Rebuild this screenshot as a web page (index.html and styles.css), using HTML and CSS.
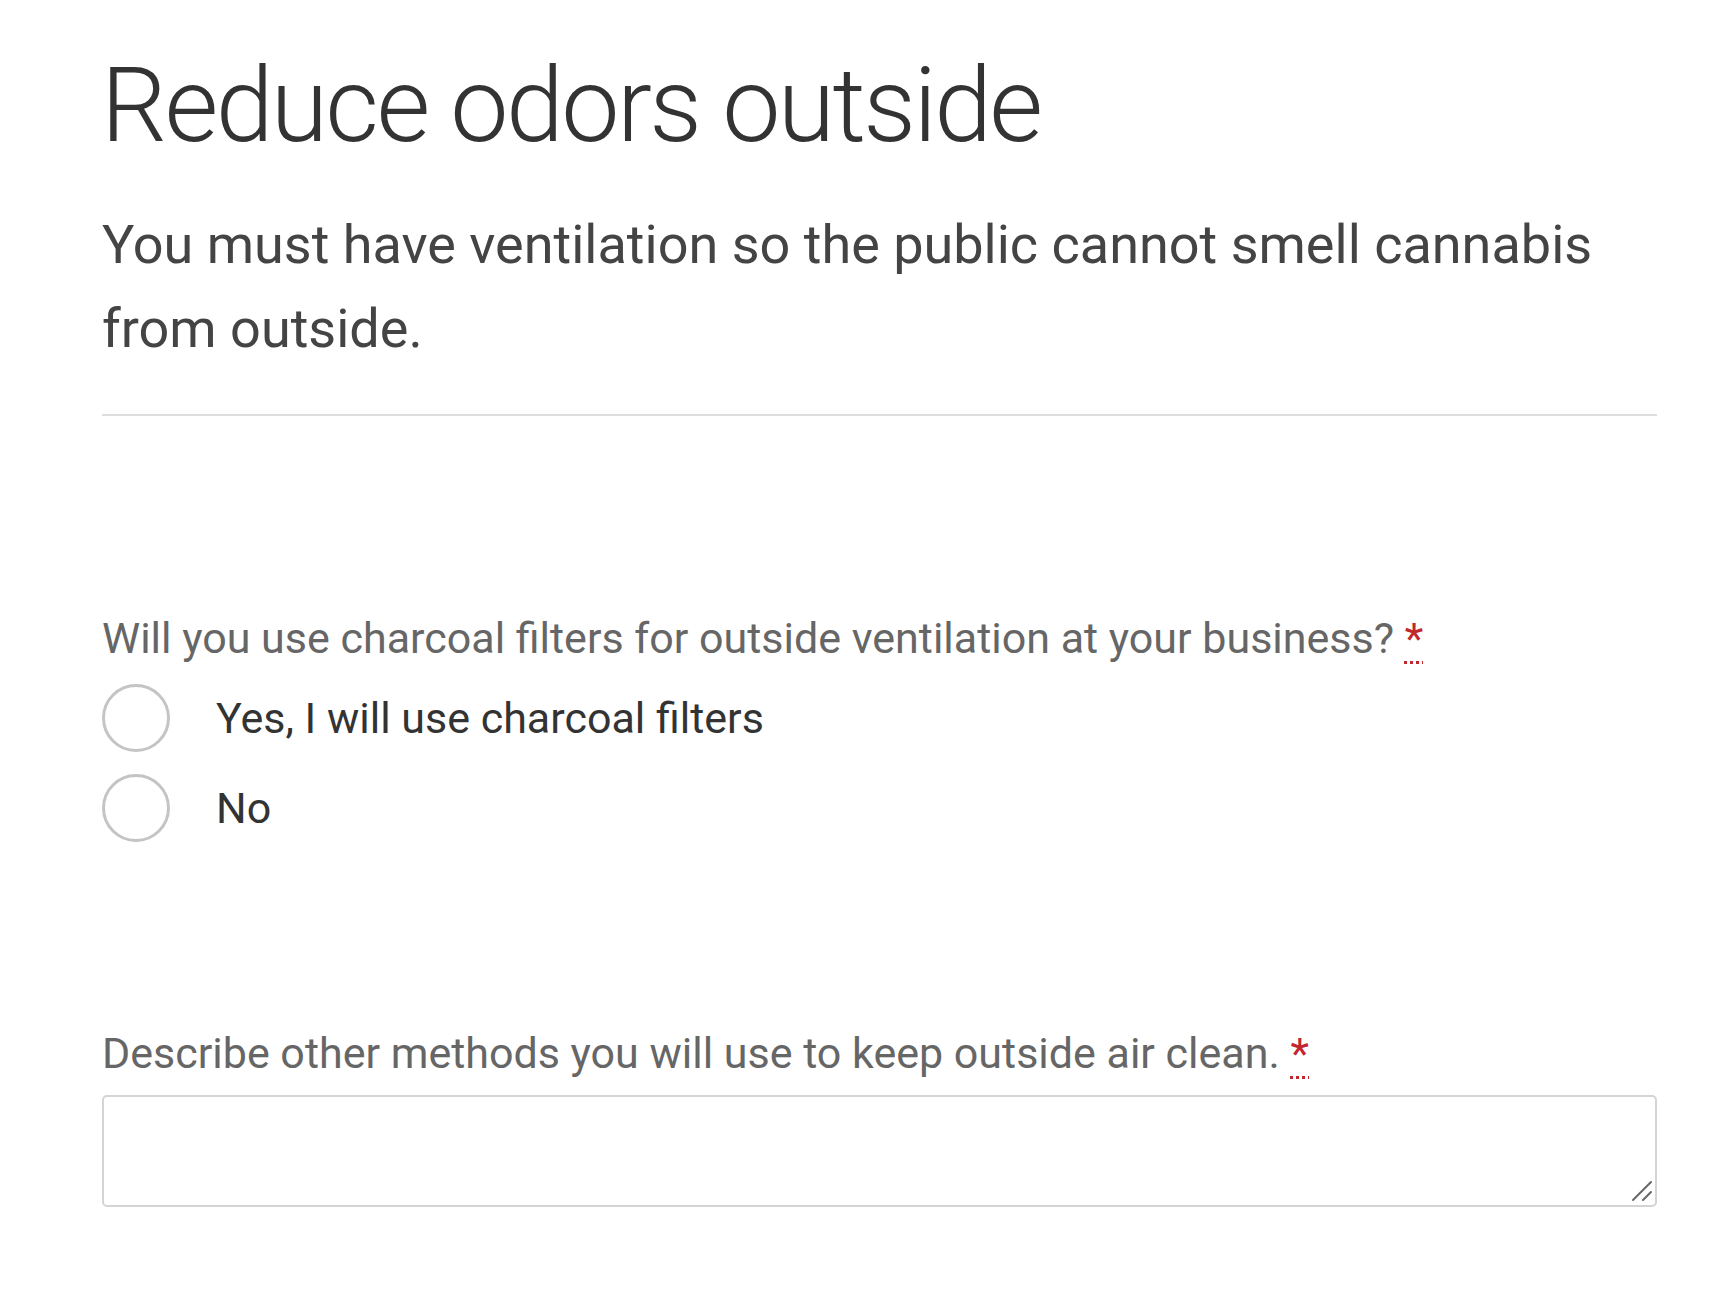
FILE: index.html
```html
<!DOCTYPE html>
<html lang="en">
<head>
<meta charset="utf-8">
<title>Reduce odors outside</title>
<link rel="stylesheet" href="styles.css">
</head>
<body>
<main class="page">
  <h1 class="title">Reduce odors outside</h1>
  <p class="lead">You must have ventilation so the public cannot smell cannabis from outside.</p>
  <hr class="divider">
  <fieldset class="field field-radio">
    <legend class="label">Will you use charcoal filters for outside ventilation at your business? <abbr class="req" title="required">*</abbr></legend>
    <div class="options">
      <label class="option"><input type="radio" name="charcoal" class="radio"><span class="option-text">Yes, I will use charcoal filters</span></label>
      <label class="option"><input type="radio" name="charcoal" class="radio"><span class="option-text">No</span></label>
    </div>
  </fieldset>
  <div class="field field-text">
    <label class="label" for="methods">Describe other methods you will use to keep outside air clean. <abbr class="req" title="required">*</abbr></label>
    <div class="textarea-wrap">
      <textarea id="methods" class="textarea"></textarea>
      <svg class="grabber" width="22" height="22" viewBox="0 0 22 22" aria-hidden="true">
        <path d="M2 20 L20 2" stroke="#666" stroke-width="2" stroke-linecap="round"/>
        <path d="M12 20 L20 12" stroke="#666" stroke-width="2" stroke-linecap="round"/>
      </svg>
    </div>
  </div>
</main>
</body>
</html>
```
FILE: styles.css
```css
html, body {
  margin: 0;
  padding: 0;
  background: #fff;
}
body {
  font-family: Roboto, "Liberation Sans", sans-serif;
  color: #333;
}
.page {
  width: 1555px;
  padding: 0 0 0 102px;
  display: flex;
  flex-direction: column;
}
.title {
  margin: 0 0 0 -1px;
  padding-top: 46px;
  font-family: Roboto, sans-serif;
  font-weight: 300;
  font-size: 104px;
  line-height: 120px;
  color: #333;
  letter-spacing: -2.6px;
}
.lead {
  margin: 37px 0 0;
  font-size: 54px;
  line-height: 84px;
  color: #444;
  max-width: 1540px;
}
.divider {
  margin: 43px 0 0;
  border: 0;
  border-top: 2px solid #ddd;
  width: 1555px;
}
.field {
  border: 0;
  margin: 0;
  padding: 0;
  min-width: 0;
}
.field-radio {
  margin-top: 198px;
}
.label {
  display: block;
  padding: 0;
  font-size: 43px;
  line-height: 48px;
  color: #666;
}
.req {
  color: #c1272d;
  text-decoration: underline dotted #c1272d;
  text-decoration-thickness: 3px;
  text-underline-offset: 8px;
  cursor: help;
}
.options {
  display: flex;
  flex-direction: column;
  margin-top: 11px;
}
.option {
  display: flex;
  align-items: center;
  height: 90px;
}
.radio {
  appearance: none;
  -webkit-appearance: none;
  margin: 0;
  width: 68px;
  height: 68px;
  border: 3px solid #c4c4c4;
  border-radius: 50%;
  background: #fff;
  box-sizing: border-box;
  flex: none;
}
.option-text {
  margin-left: 46px;
  font-size: 43px;
  color: #333;
}
.field-text {
  margin-top: 176px;
}
.textarea-wrap {
  position: relative;
  margin-top: 18px;
  width: 1555px;
}
.textarea {
  display: block;
  width: 100%;
  height: 112px;
  box-sizing: border-box;
  border: 2px solid #d4d4d4;
  border-radius: 5px;
  resize: none;
  font: inherit;
}
.grabber {
  position: absolute;
  right: 4px;
  bottom: 5px;
  pointer-events: none;
}
```
